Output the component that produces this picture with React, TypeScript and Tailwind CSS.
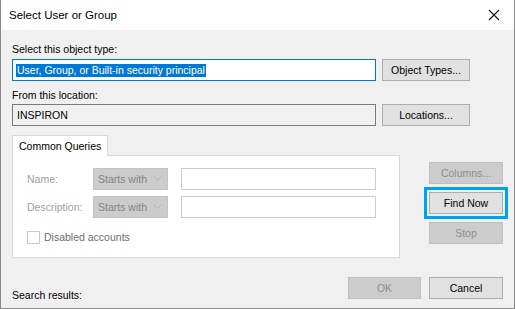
import React from 'react';

const btn =
    'h-[22px] flex items-center justify-center border text-[10.5px] leading-[13px]';
const btnOn = `${btn} bg-[#e1e1e1] border-[#adadad] text-black`;
const btnOff = `${btn} bg-[#cccccc] border-[#bfbfbf] text-[#8c8c8c]`;

const CloseIcon: React.FC = () => (
    <svg width="12" height="12" viewBox="0 0 12 12" className="shrink-0">
        <path d="M1 1 L11 11 M11 1 L1 11" stroke="#111" strokeWidth="1.1" fill="none" />
    </svg>
);

const Chevron: React.FC = () => (
    <svg width="9" height="6" viewBox="0 0 9 6">
        <path d="M0.5 0.5 L4.5 4.5 L8.5 0.5" stroke="#b0b0b0" strokeWidth="1" fill="none" />
    </svg>
);

const QueryRow: React.FC<{ label: string }> = ({ label }) => (
    <div className="flex items-center h-[22px]">
        <span className="w-[66px] text-[#a0a0a0]">{label}</span>
        <div className="w-[75px] h-[22px] flex items-center justify-between pl-[4px] pr-[5px] bg-[#cccccc] border border-[#c4c4c4] text-[#838383]">
            <span>Starts with</span>
            <Chevron />
        </div>
        <div className="ml-[13px] w-[195px] h-[22px] bg-white border border-[#cccccc]" />
    </div>
);

const App: React.FC = () => {
    return (
        <div className="w-[515px] h-[309px] flex flex-col bg-[#f0f0f0] border-x border-b border-[#8a8a8a] font-['Liberation_Sans',Arial,sans-serif] text-[10.5px] leading-[13px] text-black overflow-hidden">
            {/* Title bar */}
            <div className="h-[30px] shrink-0 bg-white flex items-center justify-between pl-[8px] pr-[14px]">
                <span className="text-[11.5px]">Select User or Group</span>
                <CloseIcon />
            </div>

            {/* Body */}
            <div className="flex-1 flex flex-col pl-[11px] pt-[13px]">
                <div>Select this object type:</div>
                <div className="flex mt-[3px] gap-[6px]">
                    <div className="w-[364px] h-[22px] flex items-center pl-[3px] bg-white border border-[#0078d7]">
                        <span className="bg-[#0078d7] text-white px-[1px]">User, Group, or Built-in security principal</span>
                    </div>
                    <div className={`${btnOn} w-[88px]`}>Object Types...</div>
                </div>

                <div className="mt-[8px]">From this location:</div>
                <div className="flex mt-[2px] gap-[6px]">
                    <div className="w-[364px] h-[22px] flex items-center pl-[4px] bg-[#f0f0f0] border border-[#7a7a7a]">
                        INSPIRON
                    </div>
                    <div className={`${btnOn} w-[88px]`}>Locations...</div>
                </div>

                {/* Query tab + side buttons */}
                <div className="flex mt-[9px]">
                    <div className="w-[388px] flex flex-col">
                        <div className="flex items-end">
                            <div className="h-[21px] px-[6px] flex items-center bg-white border-x border-t border-[#d9d9d9]">
                                Common Queries
                            </div>
                            <div className="flex-1 border-b border-[#d9d9d9]" />
                        </div>
                        <div className="h-[102px] bg-white border-x border-b border-[#d9d9d9] pl-[14px] pt-[12px] flex flex-col gap-[6px]">
                            <QueryRow label="Name:" />
                            <QueryRow label="Description:" />
                            <div className="flex items-center mt-[7px]">
                                <div className="w-[13px] h-[13px] bg-white border border-[#c8c8c8]" />
                                <span className="ml-[4px] text-[#6d6d6d]">Disabled accounts</span>
                            </div>
                        </div>
                    </div>

                    <div className="ml-[29px] pt-[27px] flex flex-col gap-[3px]">
                        <div className={`${btnOff} w-[74px]`}>Columns...</div>
                        <div className="-mx-[5px] p-[2px] border-[3px] border-[#00a2ed]">
                            <div className={`${btnOn} w-[74px]`}>Find Now</div>
                        </div>
                        <div className={`${btnOff} w-[74px]`}>Stop</div>
                    </div>
                </div>

                {/* Bottom row */}
                <div className="flex justify-between mt-[19px] h-[25px] w-[491px]">
                    <span className="self-end">Search results:</span>
                    <div className="flex gap-[8px]">
                        <div className={`${btnOff} w-[73px]`}>OK</div>
                        <div className={`${btnOn} w-[74px]`}>Cancel</div>
                    </div>
                </div>
            </div>
        </div>
    );
};

export default App;
